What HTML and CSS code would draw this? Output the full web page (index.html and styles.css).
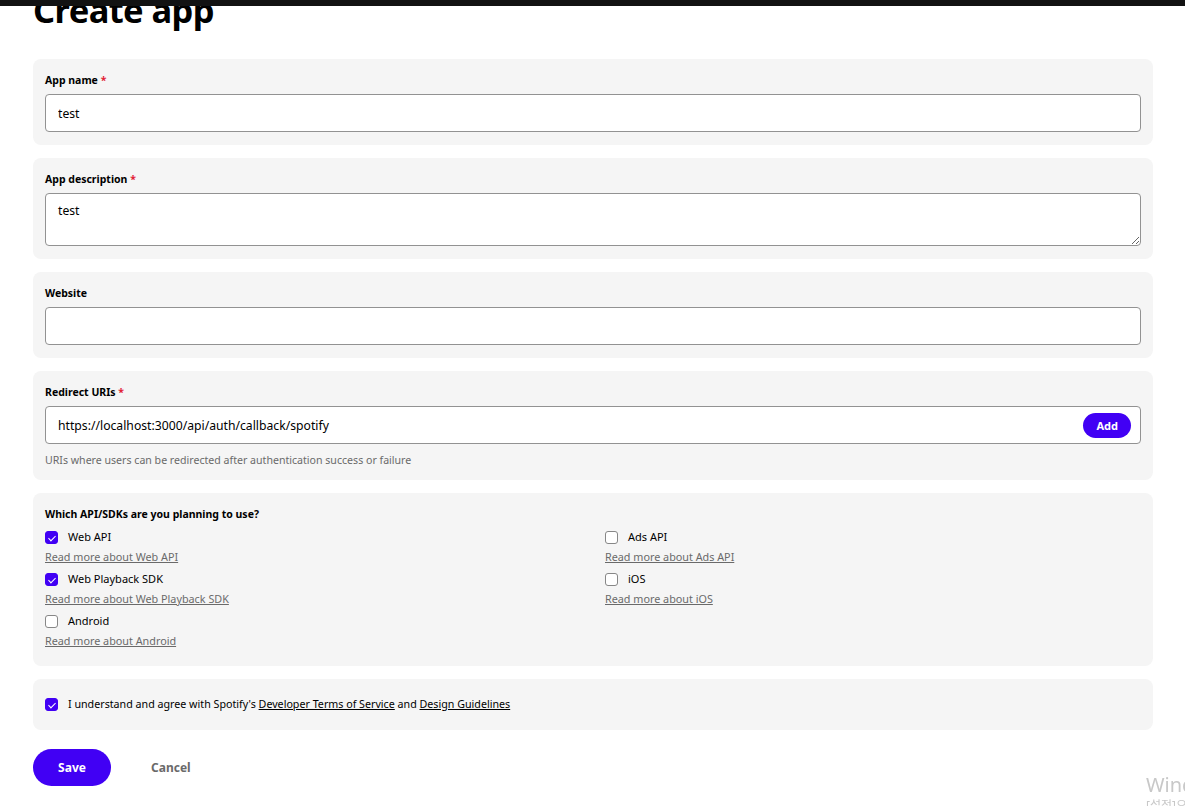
FILE: index.html
```html
<!DOCTYPE html>
<html lang="en">
<head>
  <meta charset="UTF-8" />
  <meta name="viewport" content="width=device-width, initial-scale=1.0" />
  <title>Create app</title>
  <link rel="stylesheet" href="styles.css">
</head>
<body>
  <div class="topbar"></div>

  <main class="page">
    <h1>Create app</h1>

    <form class="form">
      <div class="field">
        <label>App name <span class="req">*</span></label>
        <input class="input" type="text" value="test">
      </div>

      <div class="field">
        <label>App description <span class="req">*</span></label>
        <textarea class="input textarea">test</textarea>
      </div>

      <div class="field">
        <label>Website</label>
        <input class="input" type="text" value="">
      </div>

      <div class="field">
        <label>Redirect URIs <span class="req">*</span></label>
        <div class="input uri">
          <span>https://localhost:3000/api/auth/callback/spotify</span>
          <button type="button" class="pill small">Add</button>
        </div>
        <p class="hint">URIs where users can be redirected after authentication success or failure</p>
      </div>

      <div class="field apifield">
        <label>Which API/SDKs are you planning to use?</label>
        <div class="apis">
          <div class="api">
            <div class="check"><span class="box on"></span>Web API</div>
            <a href="#">Read more about Web API</a>
          </div>
          <div class="api">
            <div class="check"><span class="box"></span>Ads API</div>
            <a href="#">Read more about Ads API</a>
          </div>
          <div class="api">
            <div class="check"><span class="box on"></span>Web Playback SDK</div>
            <a href="#">Read more about Web Playback SDK</a>
          </div>
          <div class="api">
            <div class="check"><span class="box"></span>iOS</div>
            <a href="#">Read more about iOS</a>
          </div>
          <div class="api">
            <div class="check"><span class="box"></span>Android</div>
            <a href="#">Read more about Android</a>
          </div>
        </div>
      </div>

      <div class="field terms">
        <div class="check"><span class="box on"></span>I understand and agree with Spotify's&nbsp;<a href="#">Developer Terms of Service</a>&nbsp;and&nbsp;<a href="#">Design Guidelines</a></div>
      </div>

      <div class="actions">
        <button type="button" class="pill save">Save</button>
        <button type="button" class="cancel">Cancel</button>
      </div>
    </form>
  </main>

  <div class="watermark">
    <div class="wm-title">Windows 정품 인증</div>
    <div class="wm-sub">[설정]으로 이동하여 Windows를 정품 인증합니다.</div>
  </div>
</body>
</html>
```

FILE: styles.css
```css
:root {
  --accent: #4100f4;
  --card: #f5f5f5;
  --line: #929292;
}

* {
  box-sizing: border-box;
}

html, body {
  height: 100%;
  overflow: hidden;
}

body {
  margin: 0;
  font-family: "Noto Sans", "Noto Sans CJK KR", sans-serif;
  background: #fff;
  color: #000;
}

.topbar {
  position: fixed;
  top: 0;
  left: 0;
  right: 0;
  height: 6px;
  background: #121212;
  z-index: 5;
}

.page {
  padding: 0 32px 0 33px;
}

h1 {
  margin: -13px 0 0;
  font-size: 34.5px;
  line-height: 46px;
  font-weight: 700;
  letter-spacing: -0.6px;
}

.form {
  margin-top: 26px;
  display: flex;
  flex-direction: column;
  gap: 13px;
}

.field {
  background: var(--card);
  border-radius: 8px;
  padding: 12px 12px 13px;
}

.field label {
  display: block;
  font-size: 10.5px;
  font-weight: 700;
  line-height: 16px;
  margin: 1px 0 6px;
}

.req {
  color: #e22134;
}

.input {
  display: block;
  width: 100%;
  height: 38px;
  border: 1px solid var(--line);
  border-radius: 4px;
  background: #fff;
  padding: 0 12px;
  font-family: inherit;
  font-size: 12.2px;
  color: #000;
  outline: none;
}

.textarea {
  height: 53px;
  padding: 9px 12px;
  resize: vertical;
  line-height: 16px;
}

.uri {
  display: flex;
  align-items: center;
  justify-content: space-between;
  padding-right: 9px;
}

.pill {
  border: none;
  border-radius: 999px;
  background: var(--accent);
  color: #fff;
  font-family: inherit;
  font-weight: 700;
}

.pill.small {
  height: 25px;
  padding: 0 13px;
  font-size: 11px;
}

.hint {
  margin: 9px 0 0;
  font-size: 10.6px;
  color: #6a6a6a;
  line-height: 14px;
}

.apifield {
  padding-bottom: 16px;
}

.apis {
  display: grid;
  grid-template-columns: 1fr 1fr;
  column-gap: 24px;
  row-gap: 4px;
  margin-top: 3px;
}

.api a {
  display: block;
  font-size: 10.8px;
  color: #6a6a6a;
  line-height: 18px;
  margin-top: 2px;
}

.check {
  display: flex;
  align-items: center;
  font-size: 11px;
  line-height: 18px;
}

.check a {
  color: #000;
}

.box {
  width: 13px;
  height: 13px;
  border: 1px solid #878787;
  border-radius: 3px;
  background: #fff;
  margin-right: 10px;
  position: relative;
  flex: none;
}

.box.on {
  background: var(--accent);
  border-color: var(--accent);
}

.box.on::after {
  content: "";
  position: absolute;
  left: 4px;
  top: 2px;
  width: 3px;
  height: 6px;
  border: solid #fff;
  border-width: 0 1px 1px 0;
  transform: rotate(45deg);
}

.terms {
  padding: 16px 12px 17px;
}

.terms .check {
  font-size: 10.7px;
}

.actions {
  display: flex;
  align-items: center;
  gap: 40px;
  margin-top: 6px;
}

.save {
  width: 78px;
  height: 37px;
  font-size: 12px;
}

.cancel {
  border: none;
  background: none;
  font-family: inherit;
  font-weight: 700;
  font-size: 12px;
  color: #6a6a6a;
  padding: 0;
}

.watermark {
  position: fixed;
  left: 1146px;
  top: 772px;
  color: #c8c8c8;
  white-space: nowrap;
  pointer-events: none;
}

.wm-title {
  font-size: 20px;
  line-height: 26px;
}

.wm-sub {
  font-size: 12px;
  line-height: 16px;
}
```
